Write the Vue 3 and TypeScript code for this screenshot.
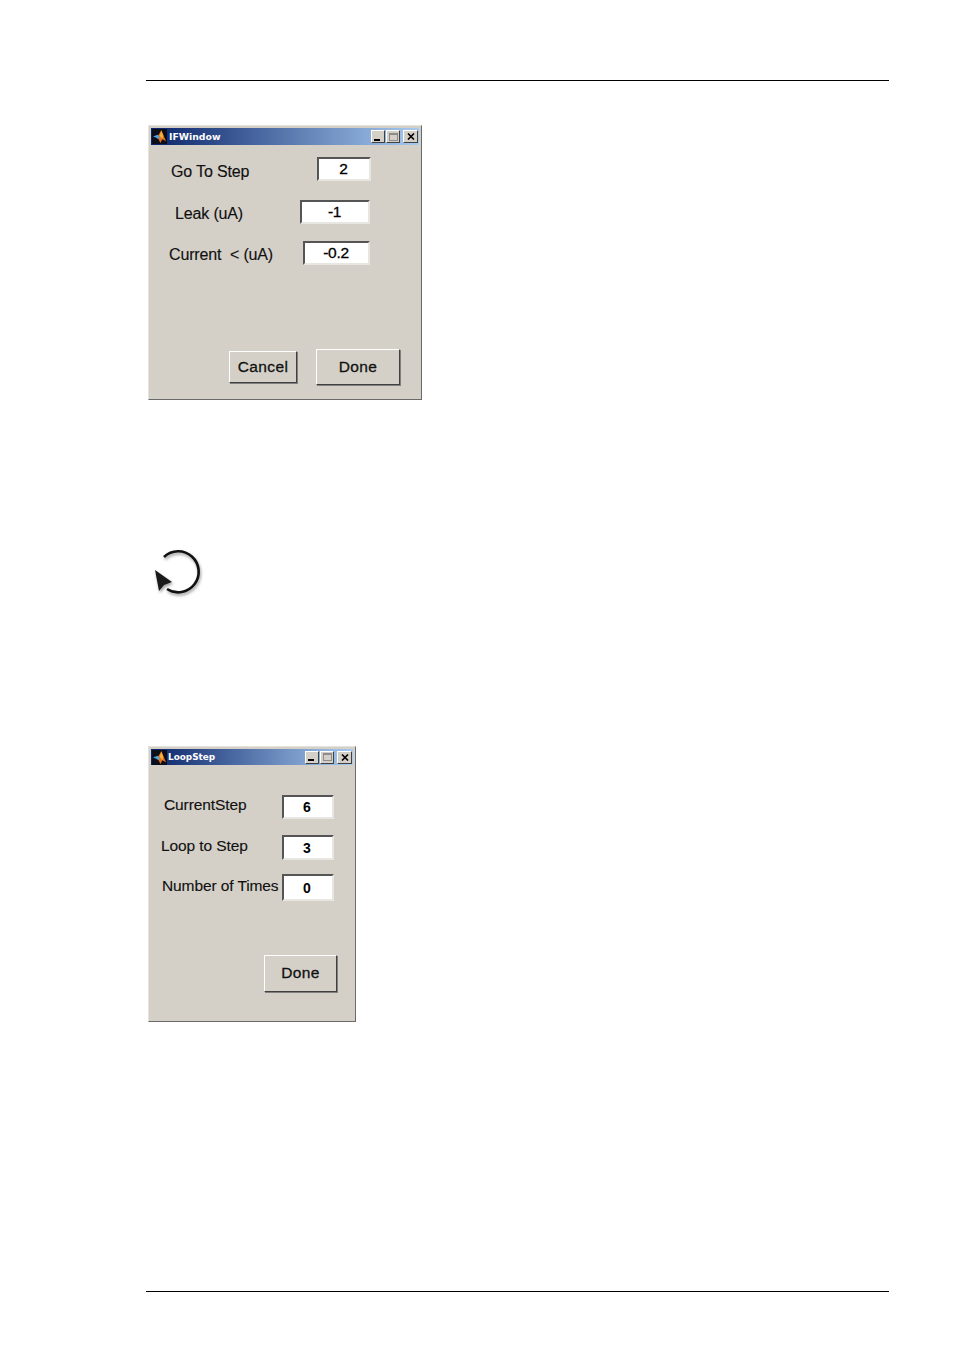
<template>
  <main class="page">
    <hr class="rule" />

    <section class="dlg dlg--if">
      <header class="titlebar">
        <svg class="logo" viewBox="0 0 16 16" aria-hidden="true">
          <rect width="16" height="16" fill="#0b0f1c" />
          <path d="M6 8 L10 1 L12 6 L15 13 L11 11 L9 15 L7 11 Z" fill="#e0701a" />
          <path d="M1 8 L6 6 L8 8 L7 11 L4 9 Z" fill="#4fa3d8" />
          <path d="M10 2 L12 7 L11 11 L8 7 Z" fill="#f3b23a" />
        </svg>
        <span class="title">IFWindow</span>
        <span class="winbtns">
          <span class="wb"><i class="min"></i></span>
          <span class="wb"><i class="max"></i></span>
          <span class="wb wb--close"><svg viewBox="0 0 8 7"><path d="M1 0.5 L7 6.5 M7 0.5 L1 6.5" stroke="#000" stroke-width="1.6" /></svg></span>
        </span>
      </header>
      <div class="row if-a">
        <label>Go To Step</label>
        <span class="field">2</span>
      </div>
      <div class="row if-b">
        <label>Leak (uA)</label>
        <span class="field">-1</span>
      </div>
      <div class="row if-c">
        <label>Current&nbsp; &lt; (uA)</label>
        <span class="field">-0.2</span>
      </div>
      <footer class="actions if-actions">
        <button class="btn btn--cancel">Cancel</button>
        <button class="btn btn--done">Done</button>
      </footer>
    </section>

    <svg class="rotate" viewBox="0 0 60 60" aria-hidden="true">
      <path d="M18 11 A20.5 20.5 0 1 1 21 43" fill="none" stroke="#111" stroke-width="2.6" />
      <path d="M9 24 L13 45 L18 39 L26 36 Z" fill="#1a1a1a" />
    </svg>

    <section class="dlg dlg--loop">
      <header class="titlebar">
        <svg class="logo" viewBox="0 0 16 16" aria-hidden="true">
          <rect width="16" height="16" fill="#0b0f1c" />
          <path d="M6 8 L10 1 L12 6 L15 13 L11 11 L9 15 L7 11 Z" fill="#e0701a" />
          <path d="M1 8 L6 6 L8 8 L7 11 L4 9 Z" fill="#4fa3d8" />
          <path d="M10 2 L12 7 L11 11 L8 7 Z" fill="#f3b23a" />
        </svg>
        <span class="title">LoopStep</span>
        <span class="winbtns">
          <span class="wb"><i class="min"></i></span>
          <span class="wb"><i class="max"></i></span>
          <span class="wb wb--close"><svg viewBox="0 0 8 7"><path d="M1 0.5 L7 6.5 M7 0.5 L1 6.5" stroke="#000" stroke-width="1.6" /></svg></span>
        </span>
      </header>
      <div class="row lp-a">
        <label>CurrentStep</label>
        <span class="field field--sm">6</span>
      </div>
      <div class="row lp-b">
        <label>Loop to Step</label>
        <span class="field field--sm">3</span>
      </div>
      <div class="row lp-c">
        <label>Number of Times</label>
        <span class="field field--sm">0</span>
      </div>
      <footer class="actions lp-actions">
        <button class="btn btn--loop">Done</button>
      </footer>
    </section>

    <hr class="rule rule--bottom" />
  </main>
</template>

<script setup lang="ts">
</script>

<style>
html, body { background: #fff; }
</style>

<style scoped>
.page {
  width: 954px;
  height: 1350px;
  box-sizing: border-box;
  padding: 80px 65px 0 146px;
  display: flex;
  flex-direction: column;
  align-items: flex-start;
  font-family: "Liberation Sans", Arial, sans-serif;
  overflow: hidden;
}

.rule {
  width: 100%;
  height: 1px;
  margin: 0;
  border: 0;
  background: #000;
  flex: none;
}
.rule--bottom { margin-top: 269px; }

/* dialog shell */
.dlg {
  box-sizing: border-box;
  margin-left: 2px;
  background: #d4d0c8;
  border: 1px solid;
  border-color: #e6e3dc #6a6a6a #6a6a6a #e6e3dc;
  padding: 2px;
  color: #111;
  flex: none;
}
.dlg--if { width: 274px; height: 275px; margin-top: 44px; }
.dlg--loop { width: 208px; height: 276px; margin-top: 140px; }

.titlebar {
  height: 17px;
  display: flex;
  align-items: center;
  background: linear-gradient(90deg, #0a246a, #a6caf0);
  color: #fff;
}
.dlg--loop .titlebar { height: 16px; }
.logo { width: 15px; height: 15px; margin-left: 1px; flex: none; }
.title {
  margin-left: 2px;
  font: bold 9.3px "DejaVu Sans", sans-serif;
}
.dlg--loop .title { margin-left: 1px; font-size: 8.9px; }
.winbtns { margin-left: auto; margin-right: 1px; display: flex; }
.wb {
  box-sizing: border-box;
  width: 14px;
  height: 13px;
  margin-left: 1px;
  background: #d4d0c8;
  border: 1px solid;
  border-color: #fff #404040 #404040 #fff;
  display: flex;
  align-items: center;
  justify-content: center;
  position: relative;
}
.wb--close { width: 15px; margin-left: 3px; }
.wb--close svg { width: 8px; height: 7px; }
.min { width: 6px; height: 2px; background: #000; margin-top: 6px; margin-right: 3px; }
.max { width: 9px; height: 8px; box-sizing: border-box; border: 1px solid #8c8c8c; border-top-width: 2px; }

/* form rows */
.row {
  display: flex;
  align-items: center;
  font-size: 16px;
}
.row label {
  box-sizing: border-box;
  padding-top: 4px;
  white-space: nowrap;
  letter-spacing: -0.15px;
  -webkit-text-stroke: 0.15px #111;
}
.field {
  box-sizing: border-box;
  padding-right: 1px;
  background: #fff;
  border: 2px solid;
  border-color: #555 #e8e6e0 #e8e6e0 #555;
  display: flex;
  align-items: center;
  justify-content: center;
  color: #000;
  font-size: 15.5px;
  letter-spacing: -0.3px;
  -webkit-text-stroke: 0.3px #000;
  height: 24px;
  flex: none;
}
.field--sm { width: 52px; font-size: 14px; font-weight: bold; letter-spacing: 0; -webkit-text-stroke: 0; padding-right: 2px; }

.if-a { margin-top: 12px; padding-left: 20px; }
.if-a label { width: 146px; padding-top: 6px; }
.if-a .field { width: 54px; }
.if-b { margin-top: 19px; padding-left: 24px; }
.if-b label { width: 125px; }
.if-b .field { width: 70px; }
.if-c { margin-top: 17px; padding-left: 18px; }
.if-c label { width: 134px; }
.if-c .field { width: 67px; }

.lp-a { margin-top: 30px; padding-left: 13px; }
.lp-a label { width: 118px; }
.lp-b { margin-top: 16px; padding-left: 10px; }
.lp-b label { width: 121px; }
.lp-b .field { height: 25px; }
.lp-c { margin-top: 14px; padding-left: 11px; }
.lp-c label { width: 120px; }
.lp-c .field { height: 27px; }
.lp-a label, .lp-b label, .lp-c label {
  padding-top: 0;
  padding-bottom: 4px;
  font-size: 15.5px;
  letter-spacing: -0.1px;
}

/* buttons */
.actions { display: flex; align-items: center; }
.btn {
  box-sizing: border-box;
  padding: 0 0 1px;
  background: #d4d0c8;
  border: 1px solid;
  border-color: #fff #404040 #404040 #fff;
  box-shadow: 1px 1px 0 #808080;
  color: #111;
  font: 15.5px "Liberation Sans", Arial, sans-serif;
  letter-spacing: 0.4px;
  -webkit-text-stroke: 0.3px #111;
}
.if-actions { margin-top: 84px; padding-left: 78px; }
.btn--cancel { width: 68px; height: 32px; }
.btn--done { width: 84px; height: 36px; margin-left: 19px; }
.lp-actions { margin-top: 54px; padding-left: 113px; }
.btn--loop { width: 73px; height: 37px; }

/* rotate cursor icon */
.rotate {
  width: 60px;
  height: 60px;
  flex: none;
  margin: 146px 0 0 0;
  filter: drop-shadow(1px 2px 1.5px rgba(0, 0, 0, 0.4));
}
</style>
